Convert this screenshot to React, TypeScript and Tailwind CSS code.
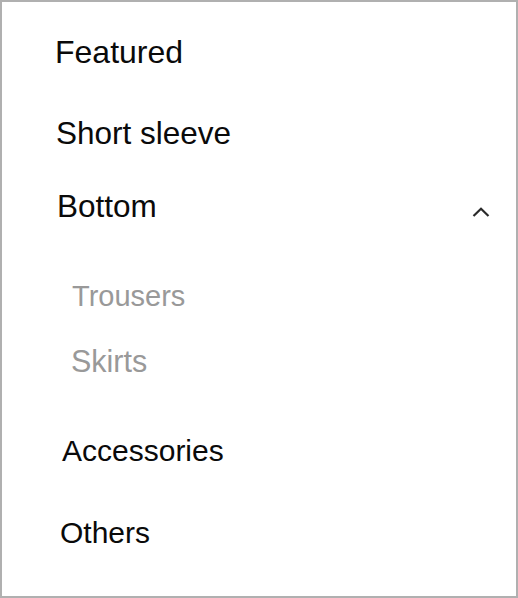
import React from "react";

export default function App() {
  return (
    <div
      className="w-[518px] h-[598px] border-2 border-[#b0b0b0] bg-white text-[#0a0a0a] box-border"
      style={{ fontFamily: '"Liberation Sans", Arial, sans-serif' }}
    >
      <nav className="flex flex-col text-[30px] leading-[30px] pt-[35px]">
        <div className="pl-[53px] text-[32px]">Featured</div>
        <div className="pl-[54px] mt-[51px] text-[31.5px]">Short sleeve</div>
        <div className="flex items-start justify-between pl-[55px] pr-[26px] mt-[43px] text-[31.5px]">
          <span>Bottom</span>
          <svg
            width="18"
            height="10"
            viewBox="0 0 18 10"
            className="mt-[16px]"
            fill="none"
            stroke="#2a2a2a"
            strokeWidth="2.2"
          >
            <polyline points="1.5,9 9,1.8 16.5,9" />
          </svg>
        </div>
        <div className="flex flex-col text-[#999]">
          <div className="pl-[70px] mt-[60px] text-[29px]">Trousers</div>
          <div className="pl-[69px] mt-[35px] text-[30.5px]">Skirts</div>
        </div>
        <div className="pl-[60px] mt-[60px]">Accessories</div>
        <div className="pl-[58px] mt-[52px]">Others</div>
      </nav>
    </div>
  );
}
